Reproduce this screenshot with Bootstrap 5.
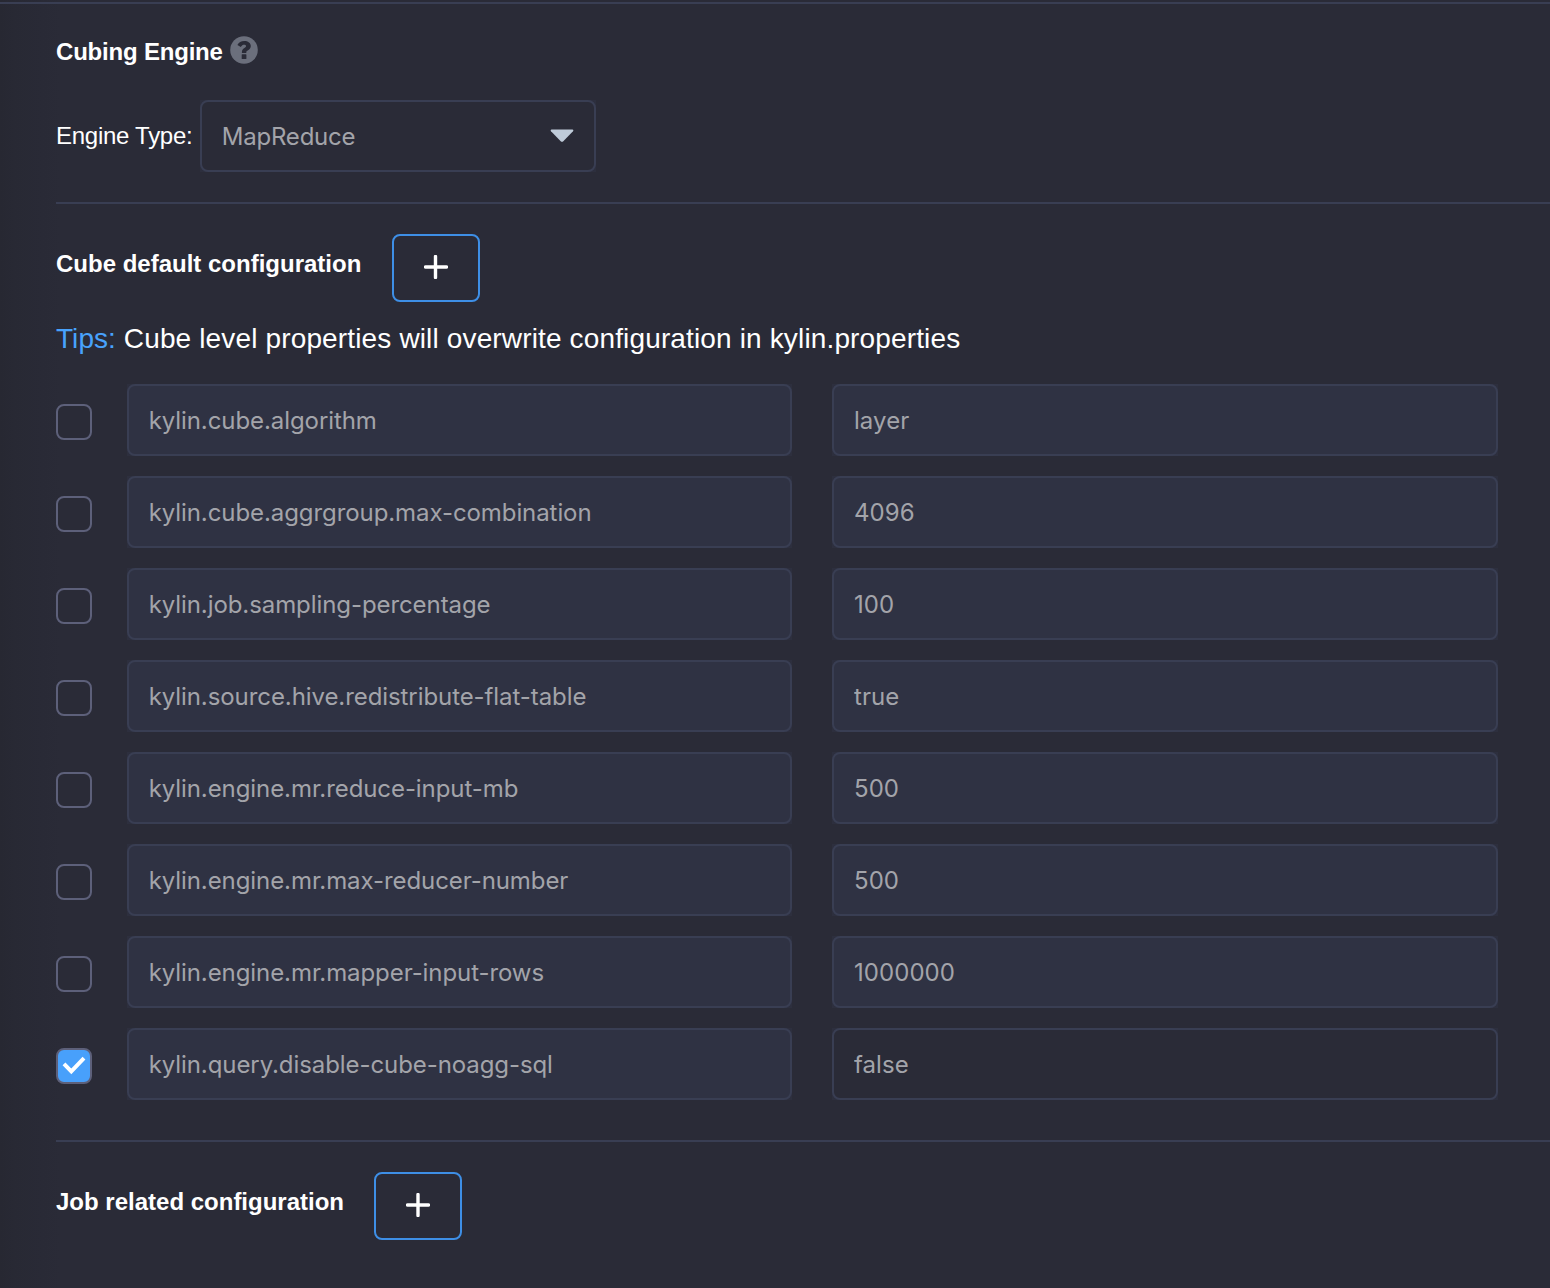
<!DOCTYPE html>
<html lang="en">
<head>
<meta charset="utf-8">
<meta name="viewport" content="width=device-width, initial-scale=1">
<title>Cube configuration</title>
<link href="https://cdn.jsdelivr.net/npm/bootstrap@5.3.0/dist/css/bootstrap.min.css" rel="stylesheet">
<style>
:root{--panel:#2a2b37;--line:#393e53;--field:#2f3243;--accent:#3e8fe6}
body{background:linear-gradient(90deg,#272832 0,#282934 14px,#292a36 42px,var(--panel) 60px);background-color:var(--panel);color:#fff;font-family:"Liberation Sans",Arial,sans-serif;font-size:24px;line-height:28px;min-height:100vh;overflow:hidden}
.panel{padding-left:56px}
.top-rule{height:2px;margin-top:2px;background:var(--line)}
.rule{height:2px;background:var(--line)}
.title{font-size:24px;line-height:28px;font-weight:700;margin:0}
.engine-head{padding-top:34px;height:96px}
.engine-head .title{letter-spacing:-.2px}
.help-icon{margin:-2px 0 0 7px}
.engine-row{height:72px;margin-bottom:30px}
.engine-label{width:144px;letter-spacing:-.27px;padding-bottom:1px}
.field-wrap{background:#2d2f3e}
.form-control,.form-control[readonly]{height:72px;padding:0 19.7px;border:2px solid var(--line);border-radius:8px;background:var(--field);color:#a3a4aa;font-family:Inter,"Noto Sans",sans-serif;font-size:24px;line-height:28px;letter-spacing:-.08px;box-shadow:none}
.form-control.editable{background:var(--panel)}
.engine-select{width:396px}
.engine-select .form-control{padding-top:1px;letter-spacing:-.2px}
.caret{right:22px;top:29px}
.head-row{padding-top:30px;gap:30px}
.config-block .head-row{gap:31px}
.head-row .title{padding-top:16px}
.btn-add{width:88px;height:68px;padding:0 0 2px;border:2px solid var(--accent);border-radius:8px}
.tips{font-size:28px;line-height:34px;margin:20px 0 0;letter-spacing:.145px}
.tips-label{color:#48a2fc;letter-spacing:.05px}
.prop-list{gap:20px;padding:28px 52px 0 0}
.form-check-input[type=checkbox]{width:36px;height:36px;margin:3px 35px 0 0;background-color:transparent;border:2px solid #5d607a;border-radius:8px}
.form-check-input[type=checkbox]:checked{background-color:#48a0fb;background-size:32px 32px;background-image:url("data:image/svg+xml,%3Csvg xmlns='http://www.w3.org/2000/svg' viewBox='0 0 32 32'%3E%3Cpath d='M6 13.900l7.300 7.400L26 8.200' fill='none' stroke='%23fff' stroke-width='4'/%3E%3C/svg%3E")}
.key-col{width:665px}
.value-col{margin-left:40px}
.value-col .form-control{padding-left:20px;letter-spacing:.06px}
.config-block{height:936px}
</style>
<script src="https://cdn.jsdelivr.net/npm/bootstrap@5.3.0/dist/js/bootstrap.bundle.min.js"></script>
</head>
<body>
<div class="d-flex flex-column">
  <div class="top-rule"></div>
  <main class="panel">
    <section>
      <div class="engine-head d-flex align-items-start">
        <h2 class="title">Cubing Engine</h2>
        <svg class="help-icon" width="28" height="28" viewBox="0 0 28 28" role="img" aria-label="Help"><circle cx="14" cy="14" r="13.8" fill="#6b6f7c"/><path d="M7.400 8.900C8.800 6.200 11 4.900 14.300 4.900c3.700 0 6.500 2 6.500 5.100 0 2.400-1.500 3.600-3.100 4.500-1.100.6-1.400 1-1.400 1.900v.6h-4.400v-.8c0-2.200.9-3.300 2.500-4.300 1.200-.7 1.600-1 1.600-1.700 0-.9-.7-1.400-1.900-1.400-1.400 0-2.200.6-3.300 2.100z" fill="#2a2b37"/><rect x="11.700" y="18.300" width="4.700" height="4.700" rx=".5" fill="#2a2b37"/></svg>
      </div>
      <div class="engine-row d-flex align-items-center">
        <label class="engine-label" for="engine">Engine Type:</label>
        <div class="engine-select field-wrap position-relative">
          <input id="engine" class="form-control editable" value="MapReduce" readonly>
          <svg class="caret position-absolute" width="24" height="14" viewBox="0 0 24 14" aria-hidden="true"><path d="M1.600.500h20.800c1.100 0 1.200 1.100.6 1.800L13.300 12.200c-.8.800-1.800.8-2.600 0L1 2.300C.4 1.600.5.500 1.600.500z" fill="#bfcbd9"/></svg>
        </div>
      </div>
    </section>
    <div class="rule"></div>
    <section class="config-block">
      <div class="head-row d-flex align-items-start">
        <h2 class="title">Cube default configuration</h2>
        <button class="btn btn-add d-flex align-items-center justify-content-center" aria-label="Add property"><svg width="24" height="24" viewBox="0 0 24 24"><path d="M11.500 1.500v21M1.500 12h21" stroke="#fff" stroke-width="3.400" stroke-linecap="round"/></svg></button>
      </div>
      <p class="tips"><span class="tips-label">Tips:</span> Cube level properties will overwrite configuration in kylin.properties</p>
      <div class="prop-list d-flex flex-column" id="props"></div>
    </section>
    <div class="rule"></div>
    <section class="head-row d-flex align-items-start">
      <h2 class="title">Job related configuration</h2>
      <button class="btn btn-add d-flex align-items-center justify-content-center" aria-label="Add job property"><svg width="24" height="24" viewBox="0 0 24 24"><path d="M12 1.500v21M1.500 12h21" stroke="#fff" stroke-width="3.400" stroke-linecap="round"/></svg></button>
    </section>
  </main>
</div>
<script>
const props = [
  ["kylin.cube.algorithm", "layer"],
  ["kylin.cube.aggrgroup.max-combination", "4096"],
  ["kylin.job.sampling-percentage", "100"],
  ["kylin.source.hive.redistribute-flat-table", "true"],
  ["kylin.engine.mr.reduce-input-mb", "500"],
  ["kylin.engine.mr.max-reducer-number", "500"],
  ["kylin.engine.mr.mapper-input-rows", "1000000"],
  ["kylin.query.disable-cube-noagg-sql", "false", true]
];
document.getElementById("props").innerHTML = props.map(([key, value, on]) => `
  <div class="d-flex align-items-center">
    <input class="form-check-input flex-shrink-0" type="checkbox" aria-label="${key}"${on ? " checked" : ""}>
    <div class="field-wrap key-col"><input class="form-control" value="${key}" readonly></div>
    <div class="field-wrap flex-fill value-col"><input class="form-control${on ? " editable" : ""}" value="${value}" readonly></div>
  </div>`).join("");
</script>
</body>
</html>
